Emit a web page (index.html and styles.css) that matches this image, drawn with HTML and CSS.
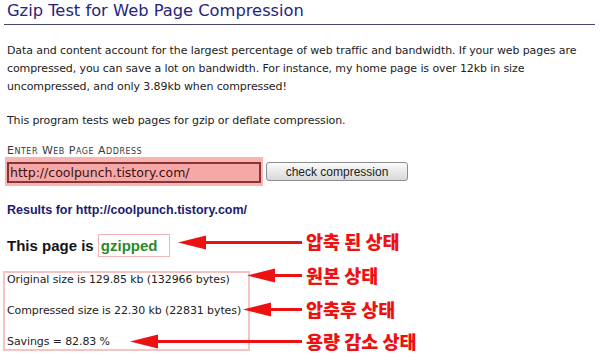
FILE: index.html
```html
<!DOCTYPE html>
<html>
<head>
<meta charset="utf-8">
<link rel="stylesheet" href="styles.css">
</head>
<body>
<div class="page">
  <h1 class="title">Gzip Test for Web Page Compression</h1>
  <p class="intro">Data and content account for the largest percentage of web traffic and bandwidth. If your web pages are compressed, you can save a lot on bandwidth. For instance, my home page is over 12kb in size uncompressed, and only 3.89kb when compressed!</p>
  <p class="intro intro-2">This program tests web pages for gzip or deflate compression.</p>
  <form class="form">
    <label class="label" for="url">Enter Web Page Address</label>
    <div class="row">
      <span class="hl"><input id="url" class="url" type="text" value="http://coolpunch.tistory.com/"></span>
      <button class="btn" type="button">check compression</button>
    </div>
  </form>
  <h3 class="results">Results for http://coolpunch.tistory.com/</h3>
  <div class="verdict">This page is <span class="gz">gzipped</span></div>
  <div class="stats">
    <p class="stat">Original size is 129.85 kb (132966 bytes)</p>
    <p class="stat">Compressed size is 22.30 kb (22831 bytes)</p>
    <p class="stat">Savings = 82.83 %</p>
  </div>

  <svg class="arrows" width="600" height="364" viewBox="0 0 600 364" aria-hidden="true">
    <g fill="#ee1111" stroke="#ee1111">
      <line x1="200" y1="242.5" x2="302" y2="242.5" stroke-width="3"/>
      <polygon points="178,242.5 206,235.5 206,249.5" stroke="none"/>
      <line x1="270" y1="275.5" x2="302" y2="275.5" stroke-width="3"/>
      <polygon points="247,275.5 275,268.5 275,282.5" stroke="none"/>
      <line x1="266" y1="309.5" x2="302" y2="309.5" stroke-width="3"/>
      <polygon points="243,309.5 271,302.5 271,316.5" stroke="none"/>
      <line x1="152" y1="341.5" x2="302" y2="341.5" stroke-width="3"/>
      <polygon points="130,341.5 158,334.5 158,348.5" stroke="none"/>
    </g>
  </svg>
  <span class="note note-1">압축 된 상태</span>
  <span class="note note-2">원본 상태</span>
  <span class="note note-3">압축후 상태</span>
  <span class="note note-4">용량 감소 상태</span>
</div>
</body>
</html>
```

FILE: styles.css
```css
html, body {
  margin: 0;
  padding: 0;
  background: #ffffff;
}

.page {
  position: relative;
  width: 600px;
  height: 364px;
  overflow: hidden;
  font-family: "DejaVu Sans", Verdana, sans-serif;
  color: #222222;
}

.title {
  margin: 0 5px 0 4px;
  padding: 2px 0 4px 3px;
  font-family: "DejaVu Sans", Verdana, sans-serif;
  font-size: 16.3px;
  font-weight: normal;
  line-height: 18px;
  color: #25257c;
  border-bottom: 1px solid #45456e;
}

.intro {
  margin: 17px 6px 0 7px;
  font-size: 11px;
  line-height: 18px;
  letter-spacing: -0.1px;
  color: #222222;
}

.intro-2 {
  margin-top: 16px;
}

.form {
  margin: 0;
}

.label {
  display: block;
  margin: 15px 0 0 7px;
  font-size: 11px;
  line-height: 12px;
  letter-spacing: 0.5px;
  font-variant: small-caps;
  color: #3a3a3a;
}

.row {
  display: flex;
  align-items: center;
  gap: 3px;
  margin-left: 5px;
}

.hl {
  display: block;
  box-sizing: border-box;
  width: 258px;
  height: 29px;
  padding: 5px 2px 3px 2px;
  background: #f8b3b3;
}

.url {
  display: block;
  box-sizing: border-box;
  width: 254px;
  height: 21px;
  margin: 0;
  padding: 0 0 0 1px;
  border: 2px solid #8a3333;
  background: #f6a8a8;
  font-family: "DejaVu Sans", Verdana, sans-serif;
  font-size: 12.5px;
  color: #3a1212;
  outline: none;
}

.btn {
  box-sizing: border-box;
  width: 142px;
  height: 19px;
  margin: 0;
  padding: 0;
  border: 1px solid #8c8c8c;
  border-radius: 3px;
  background: linear-gradient(#fbfbfb, #e9e9e9 50%, #d9d9d9);
  font-family: "Liberation Sans", Arial, sans-serif;
  font-size: 12px;
  color: #222222;
}

.results {
  margin: 17px 0 0 7px;
  font-family: "Liberation Sans", Arial, sans-serif;
  font-size: 12.5px;
  font-weight: bold;
  line-height: 14px;
  color: #1b1b6f;
}

.verdict {
  margin: 17px 0 0 7px;
  font-family: "Liberation Sans", Arial, sans-serif;
  font-size: 15px;
  font-weight: bold;
  line-height: 23px;
  color: #141414;
}

.gz {
  display: inline-block;
  box-sizing: border-box;
  height: 23px;
  padding: 0 11px 0 2px;
  border: 1px solid #f2b4b4;
  color: #2a8a2a;
  line-height: 21px;
  vertical-align: top;
}

.stats {
  box-sizing: border-box;
  width: 247px;
  margin: 14px 0 0 3px;
  padding: 0 0 0 2px;
  border: 2px solid #f6c2c2;
}

.stat {
  margin: 0;
  font-size: 11px;
  line-height: 14px;
  letter-spacing: -0.1px;
  color: #222222;
}

.stat + .stat {
  margin-top: 17px;
}

.arrows {
  position: absolute;
  left: 0;
  top: 0;
  pointer-events: none;
}

.note {
  position: absolute;
  left: 306px;
  font-family: "Noto Sans CJK KR", sans-serif;
  font-size: 18.5px;
  font-weight: 900;
  line-height: 20px;
  color: #ee1111;
  white-space: nowrap;
}

.note-1 { top: 231px; }
.note-2 { top: 265px; }
.note-3 { top: 299px; }
.note-4 { top: 331px; }
```
